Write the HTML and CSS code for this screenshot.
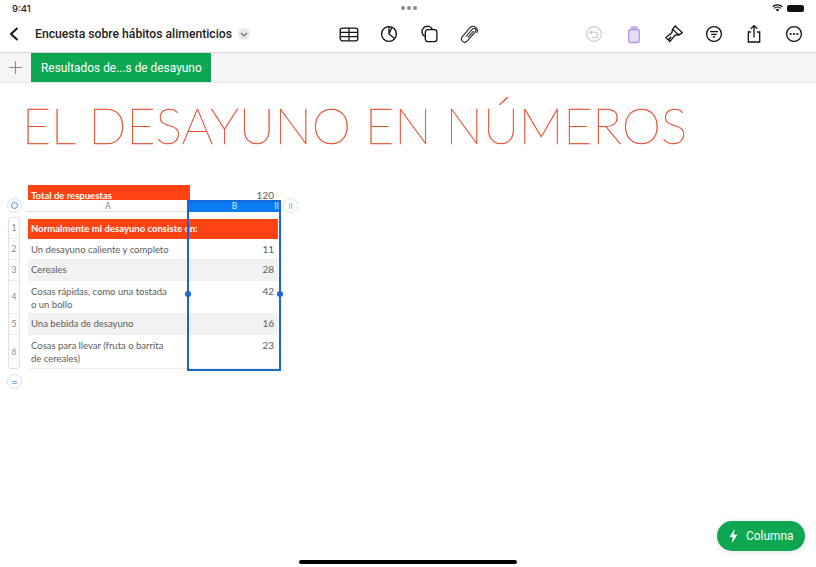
FILE: index.html
```html
<!DOCTYPE html>
<html lang="es">
<head>
    <meta charset="UTF-8">
    <meta name="viewport" content="width=device-width, initial-scale=1.0">
    <title>Encuesta sobre hábitos alimenticios</title>
    <link rel="stylesheet" href="styles.css">
</head>
<body>
    <div class="app">
        <div class="status">
            <span class="clock">9:41</span>
            <span class="dots"><i></i><i></i><i></i></span>
            <span class="status-right">
                <svg width="11" height="8" viewBox="0 0 11 8"><path d="M.6 2.8a7 7 0 0 1 9.8 0M2.2 4.4a4.7 4.7 0 0 1 6.6 0" fill="none" stroke="#111" stroke-width="1.3"/><path d="M3.8 5.7a2.4 2.4 0 0 1 3.4 0L5.5 7.6z" fill="#111"/></svg>
                <span class="battery"></span>
            </span>
        </div>

        <div class="toolbar">
            <div class="doc">
                <svg class="back" width="10" height="14" viewBox="0 0 10 14"><path d="M8.5 1 2 7l6.5 6" fill="none" stroke="#111" stroke-width="1.9"/></svg>
                <span class="doc-title">Encuesta sobre hábitos alimenticios</span>
                <span class="doc-more"><svg width="8" height="5" viewBox="0 0 8 5"><path d="M1 1l3 3 3-3" fill="none" stroke="#666" stroke-width="1.1"/></svg></span>
            </div>
            <div class="tools">
                <svg width="24" height="24" viewBox="0 0 24 24" fill="none" stroke="#111" stroke-width="1.3"><rect x="3.2" y="6.200" width="17.600" height="12.600" rx="2.200"/><path d="M3.200 10.400h17.600M3.200 14.600h17.600M12 6.200v12.600"/></svg>
                <svg width="24" height="24" viewBox="0 0 24 24" fill="none" stroke="#111" stroke-width="1.3"><circle cx="12" cy="12" r="7.4"/><path d="M12 4.6V12l5.800 4.400M12 12l3-6.700"/></svg>
                <svg width="24" height="24" viewBox="0 0 24 24" fill="none" stroke="#111" stroke-width="1.3"><path d="M7.700 14.500a5.500 5.500 0 1 1 7.700-7.200"/><rect x="8.300" y="7.700" width="11.600" height="12" rx="2.600"/></svg>
                <svg width="24" height="24" viewBox="0 0 24 24" fill="none" stroke="#222" stroke-width="1.1"><path d="M9 14.500l6.600-7.700a2 2 0 0 1 3 2.600l-8.400 9.800a3.300 3.300 0 0 1-5-4.300l8-9.400a4.300 4.300 0 0 1 6.500 5.500"/><path d="M11 15.300l5.500-6.300"/></svg>
            </div>
            <div class="tools tools-right">
                <svg width="24" height="24" viewBox="0 0 24 24" fill="none" stroke="#c9c9c9" stroke-width="1.1"><circle cx="12" cy="12" r="7.400"/><path d="M9.800 8.300 8 10.200l1.800 1.900M8.200 10.200h5a2.500 2.500 0 0 1 0 5.300h-3"/></svg>
                <svg width="24" height="24" viewBox="0 0 24 24"><rect x="8.500" y="4.200" width="7" height="3.300" rx="1" fill="#c5aee6"/><rect x="6.700" y="7.500" width="10.600" height="13" rx="2.200" fill="#e6dcf6" stroke="#b596de" stroke-width="1.300"/></svg>
                <svg width="24" height="24" viewBox="0 0 24 24" fill="none" stroke="#111" stroke-width="1.300"><path d="M13.200 4l7 6.600-3.400 2.600-6.200-5.900z"/><path d="M10.600 7.300l-.8 3.600-2.800 2-3 2.700 3.800 4 2.700-3.300 2-2.700 5-1.500"/><path d="M6.300 18l2.800-3.100" stroke-width="1.600"/></svg>
                <svg width="24" height="24" viewBox="0 0 24 24" fill="none" stroke="#111" stroke-width="1.300"><circle cx="12" cy="12" r="7.400"/><path d="M8 9.700h8M9.300 12.300h5.400M10.800 14.900h2.400"/></svg>
                <svg width="24" height="24" viewBox="0 0 24 24" fill="none" stroke="#111" stroke-width="1.300"><path d="M9 10H6.300v10h11.400V10H15M12 15.500V3.800M8.800 6.800 12 3.600l3.200 3.200"/></svg>
                <svg width="24" height="24" viewBox="0 0 24 24"><circle cx="12" cy="12" r="7.400" fill="none" stroke="#111" stroke-width="1.300"/><circle cx="8.600" cy="12" r="1.100" fill="#111"/><circle cx="12" cy="12" r="1.100" fill="#111"/><circle cx="15.400" cy="12" r="1.100" fill="#111"/></svg>
            </div>
        </div>

        <div class="tabbar">
            <span class="add-tab"><svg width="13" height="13" viewBox="0 0 13 13"><path d="M6.500 0v13M0 6.500h13" stroke="#8e8e8e" stroke-width="1.100"/></svg></span>
            <span class="tab">Resultados de...s de desayuno</span>
        </div>

        <div class="sheet">
            <h1 class="sheet-title">EL DESAYUNO EN NÚMEROS</h1>

            <div class="table-box">
                <div class="total-row">
                    <div class="total-label">Total de respuestas</div>
                    <div class="total-value">120</div>
                </div>
                <div class="col-heads">
                    <div class="col-a">A</div>
                    <div class="col-b">B<span class="col-grip">II</span></div>
                </div>
                <div class="table-body">
                    <div class="row-nums">
                        <div class="num-1">1</div>
                        <div class="num-2">2</div>
                        <div class="num-3">3</div>
                        <div class="num-4">4</div>
                        <div class="num-5">5</div>
                        <div class="num-6">6</div>
                    </div>
                    <div class="rows">
                        <div class="row row-head">Normalmente mi desayuno consiste en:</div>
                        <div class="row row-2"><span class="label">Un desayuno caliente y completo</span><span class="val">11</span></div>
                        <div class="row row-3 stripe"><span class="label">Cereales</span><span class="val">28</span></div>
                        <div class="row row-4"><span class="label">Cosas rápidas, como una tostada<br>o un bollo</span><span class="val">42</span></div>
                        <div class="row row-5 stripe"><span class="label">Una bebida de desayuno</span><span class="val">16</span></div>
                        <div class="row row-6"><span class="label">Cosas para llevar (fruta o barrita<br>de cereales)</span><span class="val">23</span></div>
                    </div>
                </div>

                <!-- overlays on the table -->
                <div class="selection">
                    <span class="knob knob-l"></span>
                    <span class="knob knob-r"></span>
                </div>
                <span class="round-btn btn-select"><i></i></span>
                <span class="round-btn btn-cols">II</span>
                <span class="round-btn btn-rows">=</span>
            </div>
        </div>

        <div class="quick-btn">
            <svg width="9" height="14" viewBox="0 0 9 14"><path d="M5.800 0 .5 8h3.200L2.800 14 8.500 5.700H5z" fill="#fff"/></svg>
            Columna
        </div>
        <div class="home-bar"></div>
    </div>
</body>
</html>
```

FILE: styles.css
```css
* {
    box-sizing: border-box;
}
body {
    margin: 0;
    background-color: #fff;
    font-family: "Inter", "Liberation Sans", sans-serif;
}
.app {
    position: relative;
    width: 816px;
    height: 567px;
    overflow: hidden;
}

/* status bar */
.status {
    position: relative;
    display: flex;
    justify-content: space-between;
    align-items: center;
    height: 16px;
    padding: 0 12px;
}
.clock {
    font-size: 9.5px;
    font-weight: 500;
    color: #222;
}
.dots {
    position: absolute;
    left: 401px;
    top: 6px;
    display: flex;
    gap: 2px;
}
.dots i {
    width: 4px;
    height: 4px;
    border-radius: 50%;
    background-color: #8b8b8b;
}
.status-right {
    display: flex;
    align-items: center;
    gap: 4px;
}
.battery {
    width: 17px;
    height: 7px;
    border-radius: 2px;
    background-color: #111;
}

/* toolbar */
.toolbar {
    display: flex;
    align-items: center;
    height: 36px;
    padding-right: 10px;
}
.doc {
    display: flex;
    align-items: center;
    width: 337px;
    padding-left: 9px;
}
.doc-title {
    margin-left: 16px;
    font-family: "Roboto", sans-serif;
    font-size: 12.2px;
    font-weight: 500;
    color: #222;
    white-space: nowrap;
}
.doc-more {
    display: flex;
    align-items: center;
    justify-content: center;
    width: 12px;
    height: 12px;
    margin-left: 6px;
    border-radius: 50%;
    background-color: #e9e9e9;
}
.tools {
    display: flex;
    gap: 16px;
}
.tools-right {
    margin-left: auto;
}

/* tabs */
.tabbar {
    display: flex;
    align-items: stretch;
    height: 31px;
    border-top: 1px solid #d9d9d9;
    border-bottom: 1px solid #e8e8e8;
    background-color: #f5f5f5;
}
.add-tab {
    display: flex;
    align-items: center;
    justify-content: center;
    width: 31px;
}
.tab {
    display: flex;
    align-items: center;
    width: 180px;
    padding-left: 10px;
    background-color: #0da651;
    color: #fff;
    font-family: "Roboto", sans-serif;
    font-size: 11.9px;
    white-space: nowrap;
}

/* sheet */
.sheet {
    padding-left: 24px;
}
.sheet-title {
    margin: 12px 0 0 -2px;
    height: 60px;
    font-family: "Lato", sans-serif;
    font-size: 50px;
    font-weight: 100;
    letter-spacing: -0.1px;
    line-height: 60px;
    color: #ea4f30;
    -webkit-text-stroke: 0.45px #ea4f30;
    white-space: nowrap;
}
.table-box {
    position: relative;
    width: 250px;
    margin: 30px 0 0 4px;
    font-family: "Lato", sans-serif;
    font-size: 9.5px;
    color: #5c5c5c;
}
.total-row {
    display: flex;
    height: 15px;
}
.total-label {
    width: 162px;
    padding: 5px 0 0 3px;
    background-color: #ff4314;
    color: #fff;
    font-weight: 700;
}
.total-value {
    flex: 1;
    padding: 4px 4px 0 0;
    text-align: right;
    font-size: 10px;
}
.col-heads {
    display: flex;
    height: 12px;
    line-height: 12px;
    text-align: center;
    font-size: 8.500px;
    color: #888;
}
.col-a {
    flex: none;
    width: 160px;
    border-bottom: 1px solid #ddd;
}
.col-b {
    position: relative;
    flex: none;
    width: 93px;
    background-color: #0b7cf2;
    color: #dcebff;
}
.col-grip {
    position: absolute;
    right: 2px;
    top: 0;
}
.table-body {
    position: relative;
    margin-top: 7px;
}
.row-nums {
    position: absolute;
    left: -20px;
    top: -2px;
    width: 12px;
    border: 1px solid #e2e2e2;
    border-radius: 3px;
    text-align: center;
    font-size: 8.500px;
    color: #888;
}
.row-nums div {
    display: flex;
    align-items: center;
    justify-content: center;
    border-bottom: 1px solid #e8e8e8;
}
.num-1 { height: 21px; }
.num-2 { height: 21px; }
.num-3 { height: 21px; }
.num-4 { height: 33px; }
.num-5 { height: 21px; }
.num-6 { height: 33px; border-bottom: 0 !important; }
.rows {
    border-bottom: 1px solid #eee;
}
.row {
    display: flex;
    justify-content: space-between;
    padding: 4px 4px 0 3px;
    line-height: 13px;
    border-bottom: 1px solid #f0f0f0;
}
.row-head {
    height: 20px;
    padding-top: 3px;
    background-color: #ff4314;
    color: #fff;
    font-weight: 700;
    letter-spacing: 0.02px;
    border-bottom: 0;
}
.row-2 { height: 21px; }
.row-3 { height: 21px; padding-top: 3px; }
.row-4 { height: 33px; }
.row-5 { height: 21px; padding-top: 3px; }
.row-6 { height: 33px; border-bottom: 0; }
.stripe {
    background-color: #f2f2f2;
}
.val {
    font-size: 10px;
}

/* selection over column B */
.selection {
    position: absolute;
    left: 159px;
    top: 15px;
    width: 94px;
    height: 171px;
    border: 2.500px solid #1668d8;
}
.knob {
    position: absolute;
    top: 89px;
    width: 6px;
    height: 6px;
    border-radius: 50%;
    background-color: #1668d8;
}
.knob-l { left: -4px; }
.knob-r { right: -4px; }
.round-btn {
    position: absolute;
    display: flex;
    align-items: center;
    justify-content: center;
    width: 15px;
    height: 15px;
    border: 1px solid #dedede;
    border-radius: 50%;
    background-color: #fff;
    color: #6aa9ea;
    font-size: 8px;
}
.btn-select {
    left: -21px;
    top: 13px;
}
.btn-select i {
    width: 7px;
    height: 7px;
    border: 1.500px solid #3f94ee;
    border-radius: 50%;
}
.btn-cols {
    left: 255px;
    top: 13px;
}
.btn-rows {
    left: -21px;
    top: 189px;
    font-size: 11px;
}

/* floating button */
.quick-btn {
    position: absolute;
    left: 717px;
    top: 521px;
    display: flex;
    align-items: center;
    gap: 8px;
    width: 88px;
    height: 30px;
    padding-left: 12px;
    border-radius: 15px;
    background-color: #0da651;
    color: #fff;
    font-family: "Roboto", sans-serif;
    font-size: 11.9px;
    box-shadow: 0 1px 6px rgba(0, 0, 0, 0.12);
}
.home-bar {
    position: absolute;
    left: 299px;
    top: 560px;
    width: 218px;
    height: 4px;
    border-radius: 2px;
    background-color: #000;
}
```
